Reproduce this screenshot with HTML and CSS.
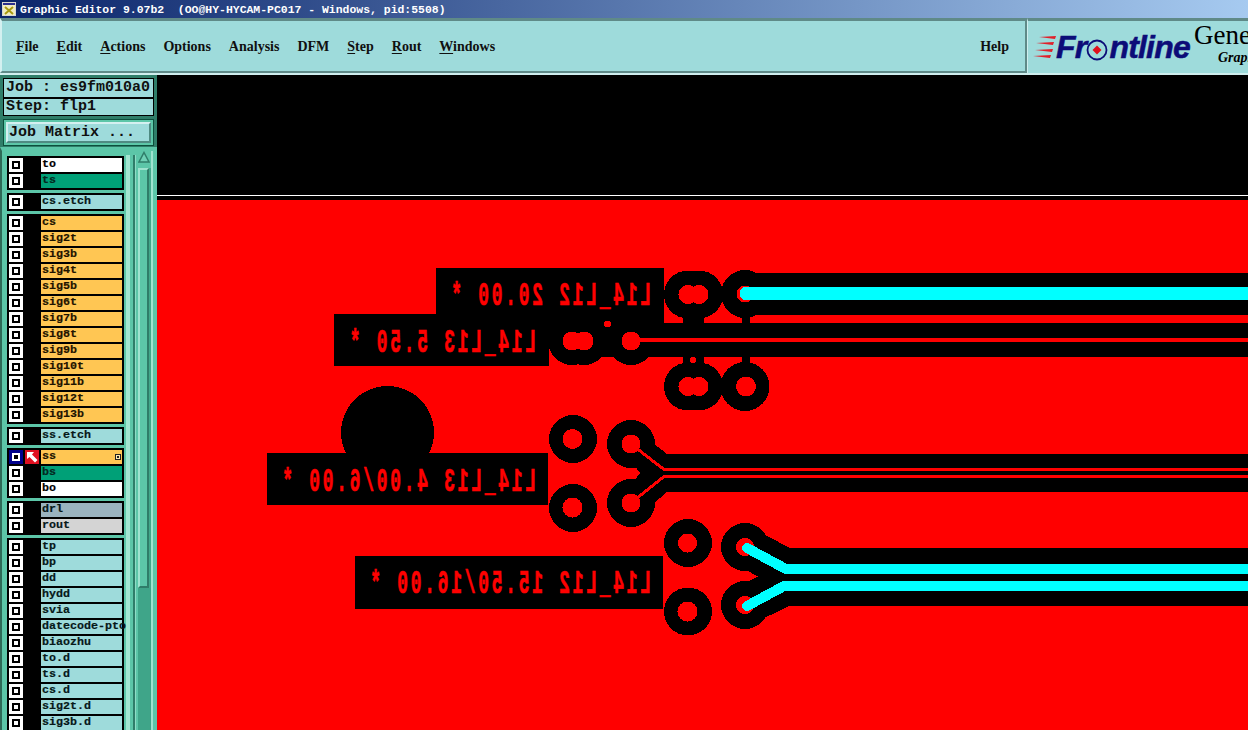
FILE: index.html
```html
<!DOCTYPE html>
<html lang="en">
<head>
<meta charset="utf-8">
<title>Graphic Editor</title>
<link rel="stylesheet" href="styles.css">
</head>
<body>
<div class="app">
  <header class="titlebar">
    <svg class="win-icon" viewBox="0 0 14 14" width="14" height="14">
      <rect class="wi-frame" x="0" y="0" width="14" height="14"/>
      <rect class="wi-top" x="1" y="1" width="12" height="2"/>
      <rect class="wi-bg" x="1" y="3" width="12" height="10"/>
      <path class="wi-x" d="M3 5 L11 12 M11 5 L3 12"/>
    </svg>
    <span class="title-text">Graphic Editor 9.07b2  (OO@HY-HYCAM-PC017 - Windows, pid:5508)</span>
  </header>

  <div class="topbar">
    <nav class="menu">
      <span class="mi"><u>F</u>ile</span>
      <span class="mi"><u>E</u>dit</span>
      <span class="mi"><u>A</u>ctions</span>
      <span class="mi">Options</span>
      <span class="mi">Analysis</span>
      <span class="mi">DFM</span>
      <span class="mi"><u>S</u>tep</span>
      <span class="mi"><u>R</u>out</span>
      <span class="mi"><u>W</u>indows</span>
      <span class="mi mi-help">Help</span>
    </nav>
    <div class="brand">
      <svg class="streaks" viewBox="0 0 24 24" width="24" height="24">
        <path d="M6 1 L23 0 L22 3 Z"/>
        <path d="M3 7 L21 6 L20 9 Z"/>
        <path d="M2 14 L20 13 L19 16 Z"/>
        <path d="M0 20 L18 19 L17 22 Z"/>
      </svg>
      <span class="wordmark">Fr<svg class="target" viewBox="0 0 22 22" width="22" height="22"><circle class="t-ring" cx="11" cy="11" r="9.500"/><path class="t-dia" d="M11 6.500 L15.500 11 L11 15.500 L6.500 11 Z"/></svg>ntline</span>
      <div class="product">
        <span class="prod-name">Genesis 2000</span>
        <span class="prod-sub">Graphic Editor</span>
      </div>
    </div>
  </div>

  <div class="main">
    <aside class="side">
      <div class="job-box">Job : es9fm010a0</div>
      <div class="job-box step-box">Step: flp1</div>
      <div class="matrix-wrap"><div class="matrix-btn">Job Matrix ...</div></div>
      <div class="list-area">
        <div class="layers">
          <div class="group">
            <div class="row"><i class="cb"></i><i class="mark"></i><span class="lb white">to</span></div>
            <div class="row"><i class="cb"></i><i class="mark"></i><span class="lb green">ts</span></div>
          </div>
          <div class="group">
            <div class="row"><i class="cb"></i><i class="mark"></i><span class="lb">cs.etch</span></div>
          </div>
          <div class="group">
            <div class="row"><i class="cb"></i><i class="mark"></i><span class="lb orange">cs</span></div>
            <div class="row"><i class="cb"></i><i class="mark"></i><span class="lb orange">sig2t</span></div>
            <div class="row"><i class="cb"></i><i class="mark"></i><span class="lb orange">sig3b</span></div>
            <div class="row"><i class="cb"></i><i class="mark"></i><span class="lb orange">sig4t</span></div>
            <div class="row"><i class="cb"></i><i class="mark"></i><span class="lb orange">sig5b</span></div>
            <div class="row"><i class="cb"></i><i class="mark"></i><span class="lb orange">sig6t</span></div>
            <div class="row"><i class="cb"></i><i class="mark"></i><span class="lb orange">sig7b</span></div>
            <div class="row"><i class="cb"></i><i class="mark"></i><span class="lb orange">sig8t</span></div>
            <div class="row"><i class="cb"></i><i class="mark"></i><span class="lb orange">sig9b</span></div>
            <div class="row"><i class="cb"></i><i class="mark"></i><span class="lb orange">sig10t</span></div>
            <div class="row"><i class="cb"></i><i class="mark"></i><span class="lb orange">sig11b</span></div>
            <div class="row"><i class="cb"></i><i class="mark"></i><span class="lb orange">sig12t</span></div>
            <div class="row"><i class="cb"></i><i class="mark"></i><span class="lb orange">sig13b</span></div>
          </div>
          <div class="group">
            <div class="row"><i class="cb"></i><i class="mark"></i><span class="lb">ss.etch</span></div>
          </div>
          <div class="group">
            <div class="row"><i class="cb cb-active"></i><i class="mark mark-work"><svg viewBox="0 0 14 14" width="14" height="14"><path class="arrow" d="M2 2 L9 2 L7 4.500 L12.500 10 L10 12.500 L4.500 7 L2 9 Z"/></svg></i><span class="lb orange lb-flag">ss<b class="flag"></b></span></div>
            <div class="row"><i class="cb"></i><i class="mark"></i><span class="lb green">bs</span></div>
            <div class="row"><i class="cb"></i><i class="mark"></i><span class="lb white">bo</span></div>
          </div>
          <div class="group">
            <div class="row"><i class="cb"></i><i class="mark"></i><span class="lb slate">drl</span></div>
            <div class="row"><i class="cb"></i><i class="mark"></i><span class="lb grey">rout</span></div>
          </div>
          <div class="group">
            <div class="row"><i class="cb"></i><i class="mark"></i><span class="lb">tp</span></div>
            <div class="row"><i class="cb"></i><i class="mark"></i><span class="lb">bp</span></div>
            <div class="row"><i class="cb"></i><i class="mark"></i><span class="lb">dd</span></div>
            <div class="row"><i class="cb"></i><i class="mark"></i><span class="lb">hydd</span></div>
            <div class="row"><i class="cb"></i><i class="mark"></i><span class="lb">svia</span></div>
            <div class="row"><i class="cb"></i><i class="mark"></i><span class="lb">datecode-pto</span></div>
            <div class="row"><i class="cb"></i><i class="mark"></i><span class="lb">biaozhu</span></div>
            <div class="row"><i class="cb"></i><i class="mark"></i><span class="lb">to.d</span></div>
            <div class="row"><i class="cb"></i><i class="mark"></i><span class="lb">ts.d</span></div>
            <div class="row"><i class="cb"></i><i class="mark"></i><span class="lb">cs.d</span></div>
            <div class="row"><i class="cb"></i><i class="mark"></i><span class="lb">sig2t.d</span></div>
            <div class="row"><i class="cb"></i><i class="mark"></i><span class="lb">sig3b.d</span></div>
          </div>
        </div>
        <div class="gutter"></div>
        <div class="scrollbar">
          <div class="sb-arrow"><svg viewBox="0 0 12 13" width="12" height="13"><path class="sb-tri" d="M6 1.500 L11 11 L1 11 Z"/></svg></div>
          <div class="sb-thumb"></div>
          <div class="sb-track"></div>
        </div>
      </div>
    </aside>

    <main class="canvas">
      <svg class="board" viewBox="157 75 1091 655" width="1091" height="655">
        <rect class="b-white" x="157" y="195" width="1091" height="1"/>
        <rect class="b-red" x="157" y="200" width="1091" height="530"/>

        <g class="b-black">
          <rect x="436" y="268" width="228" height="46"/>
          <rect x="334" y="314" width="215" height="52"/>
          <rect x="549" y="314" width="115" height="27"/>
          <circle cx="688" cy="294.500" r="24"/><circle cx="699" cy="294.500" r="24"/>
          <circle cx="745" cy="294" r="24"/>
          <rect x="745" y="273" width="503" height="42"/>
          <circle cx="572" cy="341" r="24"/><circle cx="584" cy="341" r="24"/>
          <circle cx="631" cy="341" r="24"/>
          <rect x="600" y="323" width="648" height="34"/>
          <rect x="683" y="300" width="21" height="70"/>
          <rect x="742" y="300" width="8" height="70"/>
          <circle cx="688" cy="386.500" r="24"/><circle cx="699" cy="386.500" r="24"/>
          <circle cx="745" cy="386.500" r="24.500"/>

          <circle cx="387.500" cy="432.500" r="46.500"/>
          <rect x="267" y="453" width="281" height="52"/>
          <circle cx="573" cy="439" r="24"/><circle cx="573" cy="508" r="24"/>
          <circle cx="631" cy="444" r="24"/><circle cx="631" cy="503" r="24"/>
          <path d="M640 473 L630 460 L653 443 L667 454 L1248 454 L1248 492 L667 492 L653 504 L630 487 Z"/>

          <rect x="355" y="556" width="308" height="53"/>
          <circle cx="688" cy="543" r="24"/><circle cx="688" cy="611.500" r="24"/>
          <circle cx="745" cy="547" r="24"/><circle cx="745" cy="605" r="24"/>
          <path class="b-env2" d="M745 547 L785 568 L1248 568"/>
          <path class="b-env2" d="M745 605 L785 586 L1248 586"/>
        </g>

        <g class="b-holes">
          <circle cx="688" cy="294.500" r="9.500"/><circle cx="699" cy="294.500" r="9.500"/>
          <circle cx="745" cy="294" r="8.500"/>
          <circle cx="572" cy="341" r="9.500"/><circle cx="584" cy="341" r="9.500"/>
          <circle cx="631" cy="341" r="9.500"/>
          <circle cx="607.500" cy="324" r="3.500"/>
          <circle cx="693" cy="360" r="3"/>
          <rect x="631" y="338" width="617" height="4"/>
          <circle cx="688" cy="386.500" r="9.500"/><circle cx="699" cy="386.500" r="9.500"/>
          <circle cx="746" cy="386.500" r="10"/>
          <circle cx="572.500" cy="439" r="10"/><circle cx="572.500" cy="507.500" r="10"/>
          <circle cx="631" cy="444" r="9.500"/><circle cx="631" cy="503" r="9.500"/>
          <circle cx="687.500" cy="543" r="9.500"/><circle cx="687.500" cy="611.500" r="10"/>
          <circle cx="745" cy="547" r="9"/><circle cx="745" cy="605" r="9"/>
        </g>
        <path class="b-thin" d="M631 444 L664 469.500 L1248 469.500"/>
        <path class="b-thin" d="M631 503 L664 476.500 L1248 476.500"/>

        <path class="b-cyan-wide" d="M746 293.500 L1248 293.500"/>
        <path class="b-cyan" d="M747 548 L785 568.500 L1248 568.500"/>
        <path class="b-cyan" d="M747 606 L785 585.500 L1248 585.500"/>

        <text class="b-text" transform="matrix(-1 0 0 1.870 651 305)">L14_L12 20.00 *</text>
        <text class="b-text" transform="matrix(-1 0 0 1.870 536 352)">L14_L13 5.50 *</text>
        <text class="b-text" transform="matrix(-1 0 0 1.870 536 491)">L14_L13 4.00/6.00 *</text>
        <text class="b-text" transform="matrix(-1 0 0 1.870 651 593)">L14_L12 15.50/16.00 *</text>
      </svg>
    </main>
  </div>
</div>
</body>
</html>
```

FILE: styles.css
```css
* { box-sizing: border-box; }
html, body { margin: 0; padding: 0; background: #000; }
.app { width: 1248px; height: 730px; overflow: hidden; display: flex; flex-direction: column; }

.titlebar {
  height: 18px; flex: none; display: flex; align-items: center; gap: 4px; padding-left: 2px;
  background: linear-gradient(to right, #0a246a 0%, #a6caf0 100%);
  color: #fff;
}
.title-text { font: bold 11.450px "Liberation Mono", monospace; white-space: pre; }
.wi-frame { fill: #d8d8d0; }
.wi-top { fill: #2b2f8f; }
.wi-bg { fill: #f0ecc0; }
.wi-x { stroke: #a89a10; stroke-width: 2; fill: none; }

.topbar { height: 57px; flex: none; display: flex; background: #cfeeee; }
.menu {
  width: 1027px; display: flex; align-items: center; gap: 18px; padding: 2px 16px 0 14px;
  background: #9edbdb;
  border-style: solid; border-width: 3px 2px 2px 2px;
  border-color: #5f8a88 #5f8a88 #5f8a88 #d4f0f0;
  margin-bottom: 2px;
  font: bold 14px "Liberation Serif", serif; color: #101010;
}
.mi u { text-underline-offset: 2px; }
.mi-help { margin-left: auto; }
.brand {
  flex: 1; display: flex; align-items: center; overflow: hidden; white-space: nowrap;
  background: #9edbdb; border-top: 3px solid #5f8a88; border-bottom: 2px solid #cfeeee;
  border-left: 1px solid #cfeeee; padding: 0 0 3px 5px;
}
.streaks { flex: none; margin-top: 5px; }
.streaks path { fill: #e0202a; }
.wordmark {
  font: italic bold 32px "Liberation Sans", sans-serif; color: #0c0c78; display: flex; align-items: center;
  -webkit-text-stroke: 0.500px #0c0c78;
  letter-spacing: -0.800px; margin: 4px 4px 0 -1px; height: 36px;
}
.target { margin: 4px 1px 0 0; }
.t-ring { fill: none; stroke: #0c0c78; stroke-width: 1.800; }
.t-dia { fill: #e0101c; stroke: none; }
.product { display: flex; flex-direction: column; margin-bottom: 6px; }
.prod-name { font: 27px/30px "Liberation Serif", serif; color: #000; }
.prod-sub { font: italic bold 14px/16px "Liberation Serif", serif; color: #000; margin-left: 24px; }

.main { flex: 1; display: flex; min-height: 0; }
.side {
  width: 157px; flex: none; background: #2f7d69; padding-top: 3px; display: flex; flex-direction: column; overflow: hidden;
}
.job-box {
  height: 20px; margin: 0 3px; padding-left: 2px;
  background: #9edbdb; border: 1px solid #000; color: #101010;
  font: bold 15px/17px "Liberation Mono", monospace; white-space: nowrap; overflow: hidden;
}
.step-box { height: 18px; margin-top: 0; line-height: 16px; }
.matrix-wrap { margin: 3px 3px 0; height: 27px; padding: 2px; border: 1px solid #0c4f3c; background: #5cc6a8; }
.matrix-btn {
  height: 21px; padding-left: 1px; background: #9edbdb; color: #101010;
  border-style: solid; border-width: 2px; border-color: #d4f0f0 #4f8a82 #4f8a82 #d4f0f0;
  font: bold 15px/17px "Liberation Mono", monospace;
}
.list-area {
  flex: 1; margin-top: 1px; display: flex; min-height: 0; background: #5cc6a8; border-left: 2px solid #2f6a58;
  padding-top: 4px; border-top: 4px solid #5cc6a8; align-items: stretch;
}
.layers { width: 122px; flex: none; padding: 1px 0 0 5px; display: flex; flex-direction: column; gap: 3px; }
.group { background: #000; padding: 2px 0; display: flex; flex-direction: column; gap: 2px; }
.row { display: flex; gap: 2px; padding: 0 2px; height: 14px; }
.cb {
  width: 14px; height: 14px; flex: none; background: #000;
  border: 3px solid #fff; position: relative;
}
.cb::after { content: ""; position: absolute; left: 2px; top: 2px; width: 4px; height: 4px; background: #fff; }
.cb-active { border-color: #00008c; background: #fff; }
.cb-active::after { background: #000; }
.mark { width: 14px; height: 14px; flex: none; display: block; }
.mark-work { background: #e01020; }
.mark-work svg { display: block; }
.arrow { fill: #fff; }
.lb {
  width: 81px; height: 14px; flex: none; padding-left: 1px; background: #9edbdb; color: #061818;
  font: bold 11.670px/13px "Liberation Mono", monospace; white-space: nowrap; position: relative;
  -webkit-text-stroke: 0.200px currentColor;
}
.white { background: #fff; color: #000; }
.green { background: #00a077; color: #04281f; }
.orange { background: #ffc653; color: #1e1400; }
.slate { background: #9ab3bf; }
.grey { background: #d4d4d4; }
.flag {
  position: absolute; right: 1px; top: 4px; width: 6px; height: 6px; border: 1px solid #222;
  background: linear-gradient(#222, #222) center / 2px 2px no-repeat #ffe9b0;
}
.gutter {
  width: 14px; flex: none;
  background: linear-gradient(to right, #5cc6a8 0 2px, #a3e6d2 2px 6px, #5cc6a8 6px 9px, #2f7d69 9px 11px, #8fdcc6 11px 12px, #5cc6a8 12px);
}
.scrollbar {
  width: 15px; flex: none; display: flex; flex-direction: column; background: #43a88b;
  border-right: 2px solid #9fe3cf; margin-top: -4px;
}
.sb-arrow { height: 17px; flex: none; background: #5cc6a8; }
.sb-arrow svg { display: block; }
.sb-tri { fill: #6fd0b5; stroke: #2f7d69; stroke-width: 1.500; }
.sb-thumb {
  height: 420px; flex: none; background: #5cc6a8; margin: 0 2px 0 0;
  border-style: solid; border-width: 2px; border-color: #9fe3cf #2f7d69 #2f7d69 #9fe3cf;
}
.sb-track { flex: 1; background: #3fa589; }

.canvas { flex: 1; min-width: 0; background: #000; overflow: hidden; }
.board { display: block; shape-rendering: crispEdges; }
.b-white { fill: #fff; }
.b-red { fill: #ff0000; }
.b-black { fill: #000; }
.b-env2 { fill: none; stroke: #000; stroke-width: 40px; }
.b-holes { fill: #ff0000; }
.b-thin { fill: none; stroke: #ff0000; stroke-width: 3px; }
.b-cyan-wide { fill: none; stroke: #00ffff; stroke-width: 13px; stroke-linecap: round; }
.b-cyan { fill: none; stroke: #00ffff; stroke-width: 10px; stroke-linecap: round; }
.b-text {
  fill: #ff0000; stroke: #ff0000; stroke-width: 0.400px;
  font: bold 18px "Liberation Mono", monospace; letter-spacing: 2.700px; white-space: pre;
}
```
